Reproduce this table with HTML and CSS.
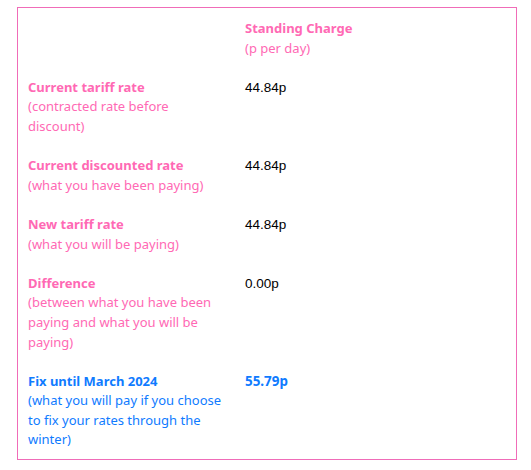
FILE: index.html
```html
<!DOCTYPE html>
<html lang="en">
<head>
<meta charset="utf-8">
<title>Standing Charge</title>
<link rel="stylesheet" href="styles.css">
</head>
<body>
<div class="card">
  <div class="grid">
    <div class="cell"></div>
    <div class="cell">
      <div class="title">Standing Charge</div>
      <div class="desc">(p per day)</div>
    </div>

    <div class="cell label">
      <div class="title">Current tariff rate</div>
      <div class="desc">(contracted rate before discount)</div>
    </div>
    <div class="cell value">44.84p</div>

    <div class="cell label">
      <div class="title">Current discounted rate</div>
      <div class="desc">(what you have been paying)</div>
    </div>
    <div class="cell value">44.84p</div>

    <div class="cell label">
      <div class="title">New tariff rate</div>
      <div class="desc">(what you will be paying)</div>
    </div>
    <div class="cell value">44.84p</div>

    <div class="cell label">
      <div class="title">Difference</div>
      <div class="desc">(between what you have been paying and what you will be paying)</div>
    </div>
    <div class="cell value">0.00p</div>

    <div class="cell label fix">
      <div class="title">Fix until March 2024</div>
      <div class="desc">(what you will pay if you choose to fix your rates through the winter)</div>
    </div>
    <div class="cell fix value-fix">55.79p</div>
  </div>
</div>
</body>
</html>
```
FILE: styles.css
```css
html, body {
  margin: 0;
  padding: 0;
  background: #ffffff;
}

body {
  font-family: "Noto Sans", "Open Sans", sans-serif;
  font-size: 13px;
  line-height: 19.6px;
  color: #ff69b4;
}

.card {
  box-sizing: border-box;
  width: 500px;
  height: 453px;
  margin: 7px 0 0 17px;
  padding: 11px 10px 8px 10px;
  border: 1px solid #f06cb8;
}

.grid {
  display: grid;
  grid-template-columns: 217px 1fr;
  row-gap: 19.6px;
}

.label {
  max-width: 197px;
}

.title {
  font-weight: 700;
}

.desc {
  font-weight: 400;
}

.value {
  font-family: "Liberation Sans", Arial, sans-serif;
  font-size: 13.5px;
  color: #000000;
}

.fix {
  color: #0f7bff;
}

.value-fix {
  font-weight: 700;
  font-size: 13.4px;
}
```
